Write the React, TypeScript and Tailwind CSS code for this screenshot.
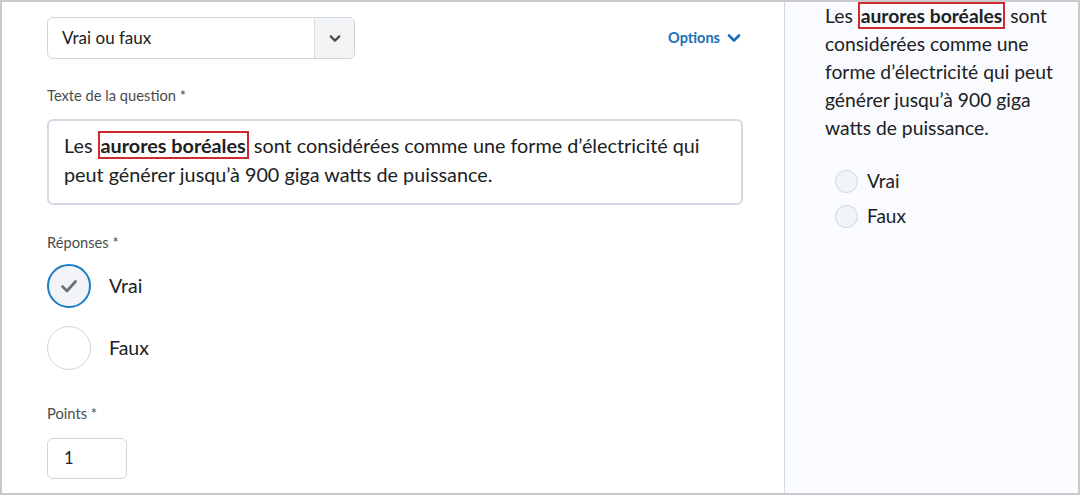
import React from 'react';

function ChevronDown({ className, color }: { className?: string; color: string }) {
  return (
    <svg viewBox="0 0 14 10" className={className} fill="none">
      <path d="M2 2.5 L7 7.5 L12 2.5" stroke={color} strokeWidth="2.6" strokeLinecap="round" strokeLinejoin="round" />
    </svg>
  );
}

function Highlight({ children }: { children: React.ReactNode }) {
  return <span className="border-2 border-[#cf2a2f] px-[1px] font-bold">{children}</span>;
}

function BigRadio({ label, checked }: { label: string; checked?: boolean }) {
  return (
    <div className="flex items-center gap-[18px]">
      <div
        className={`flex h-[44px] w-[44px] items-center justify-center rounded-full ${
          checked ? 'border-2 border-[#1a7cc5] bg-[#f1f3f6]' : 'border border-[#cfd6de] bg-white'
        }`}
      >
        {checked && (
          <svg viewBox="0 0 20 20" className="h-[20px] w-[20px]" fill="none">
            <path d="M3.5 10.5 L8 15 L16.5 5.5" stroke="#6e7376" strokeWidth="2.8" strokeLinecap="round" strokeLinejoin="round" />
          </svg>
        )}
      </div>
      <span className="text-[19.5px] text-[#202122]">{label}</span>
    </div>
  );
}

function SmallRadio({ label }: { label: string }) {
  return (
    <div className="flex h-[35px] items-center gap-[9px]">
      <div className="h-[23px] w-[23px] rounded-full border border-[#cfd6de] bg-[#f1f5fb]" />
      <span className="text-[19px] text-[#202122]">{label}</span>
    </div>
  );
}

export default function App() {
  return (
    <div
      className="flex h-[495px] w-[1080px] border-2 border-[#c9c9c9] bg-white text-[#202122]"
      style={{ fontFamily: 'Lato, "Open Sans", sans-serif' }}
    >
      {/* Editor column */}
      <div className="flex w-[782px] flex-col pl-[45px] pr-[41px] pt-[15px]">
        <div className="flex items-center justify-between">
          <div className="flex h-[42px] w-[308px] overflow-hidden rounded-[6px] border border-[#cfd6de]">
            <div className="flex flex-1 items-center pl-[14px] text-[17px] text-[#202122]">Vrai ou faux</div>
            <div className="flex w-[40px] items-center justify-center border-l border-[#d8dde3] bg-[#f1f3f5]">
              <ChevronDown className="h-[9px] w-[12px]" color="#494c4e" />
            </div>
          </div>
          <div className="mr-[2px] flex items-center gap-[7px] text-[14.5px] font-bold text-[#1a6fb8]">
            Options
            <ChevronDown className="h-[10px] w-[14px]" color="#1a6fb8" />
          </div>
        </div>

        <div className="mt-[26px] text-[14.7px] leading-[20px] text-[#494c4e]">Texte de la question *</div>
        <div className="mt-[14px] h-[86px] rounded-[6px] border-2 border-[#d3d9e3] px-[15px] pt-[10px] text-[19.8px] leading-[29px]">
          Les <Highlight>aurores boréales</Highlight> sont considérées comme une forme d’électricité qui peut générer
          jusqu’à 900 giga watts de puissance.
        </div>

        <div className="mt-[27px] text-[14.7px] leading-[20px] text-[#494c4e]">Réponses *</div>
        <div className="mt-[12px] flex flex-col gap-[18px]">
          <BigRadio label="Vrai" checked />
          <BigRadio label="Faux" />
        </div>

        <div className="mt-[33px] text-[14.7px] leading-[20px] text-[#494c4e]">Points *</div>
        <div className="mt-[15px] flex h-[41px] w-[80px] items-center rounded-[6px] border border-[#cfd6de] pl-[16px] text-[16.5px]">
          1
        </div>
      </div>

      {/* Preview column */}
      <div className="flex flex-1 flex-col border-l border-[#d3dbe6] bg-[#f9fbff] pl-[40px] pr-[10px]">
        <p className="text-[19.3px] leading-[28px]">
          Les <Highlight>aurores boréales</Highlight> sont considérées comme une forme d’électricité qui peut générer
          jusqu’à 900 giga watts de puissance.
        </p>
        <div className="mt-[22px] flex flex-col pl-[10px]">
          <SmallRadio label="Vrai" />
          <SmallRadio label="Faux" />
        </div>
      </div>
    </div>
  );
}
